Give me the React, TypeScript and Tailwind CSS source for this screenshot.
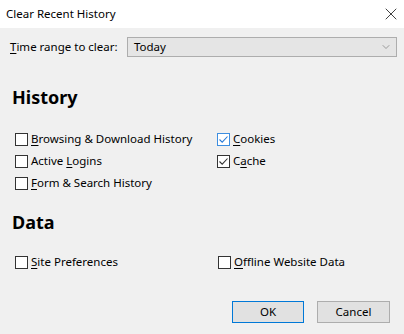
import { X, ChevronDown } from "lucide-react"

function Box({ checked, focus }: { checked?: boolean; focus?: boolean }) {
  return (
    <span
      className={`flex h-[13px] w-[13px] shrink-0 items-center justify-center border bg-white ${
        focus ? "border-[#3d8ee0]" : "border-[#333333]"
      }`}
    >
      {checked && (
        <svg width="11" height="11" viewBox="0 0 11 11">
          <path
            d="M1.5 5.5 L4.2 8.2 L9.5 2.5"
            fill="none"
            stroke={focus ? "#2a7bd6" : "#333333"}
            strokeWidth="1.1"
          />
        </svg>
      )}
    </span>
  )
}

function Check({
  pre,
  u,
  post,
  checked,
  focus,
  className,
}: {
  pre?: string
  u: string
  post: string
  checked?: boolean
  focus?: boolean
  className?: string
}) {
  return (
    <div className={`flex h-[22px] items-center gap-[3px] ${className ?? ""}`}>
      <Box checked={checked} focus={focus} />
      <span className="leading-none">
        {pre}
        <span className="underline underline-offset-2">{u}</span>
        {post}
      </span>
    </div>
  )
}

export default function App() {
  return (
    <div
      className="h-[334px] w-[404px] overflow-hidden bg-white text-[11.5px] text-black"
      style={{ fontFamily: '"Noto Sans", "Open Sans", sans-serif' }}
    >
      <div className="flex h-[28px] items-center justify-between pl-[6px] pr-[3px] bg-white">
        <span>Clear Recent History</span>
        <X className="h-[20px] w-[20px]" strokeWidth={0.9} />
      </div>
      <div className="flex h-[306px] flex-col bg-[#f0f0f0]">
        <div className="mt-[9px] flex h-[20px] items-center">
          <span className="ml-[10px] w-[117px]">
            <span className="underline underline-offset-2">T</span>ime range to clear:
          </span>
          <div className="flex h-[20px] w-[270px] items-center justify-between border border-[#adadad] bg-[#e5e5e5] pl-[6px] pr-[4px]">
            <span>Today</span>
            <ChevronDown className="h-[12px] w-[12px] text-[#666]" strokeWidth={1.2} />
          </div>
        </div>
        <div className="ml-[12px] mt-[29px] text-[18px] font-bold leading-[22px]">History</div>
        <div className="mt-[20px] flex">
          <div className="ml-[15px] flex w-[202px] flex-col">
            <Check u="B" post="rowsing & Download History" />
            <Check pre="Active " u="L" post="ogins" />
            <Check u="F" post="orm & Search History" />
          </div>
          <div className="flex flex-col">
            <Check u="C" post="ookies" checked focus />
            <Check pre="C" u="a" post="che" checked />
          </div>
        </div>
        <div className="ml-[12px] mt-[17px] text-[18px] font-bold leading-[22px]">Data</div>
        <div className="mt-[18px] flex">
          <Check className="ml-[15px] w-[203px]" u="S" post="ite Preferences" />
          <Check u="O" post="ffline Website Data" />
        </div>
        <div className="mt-[28px] flex justify-end gap-[13px] pr-[14px]">
          <button className="h-[22px] w-[72px] border border-[#0078d7] bg-[#e1e1e1]">OK</button>
          <button className="h-[22px] w-[73px] border border-[#adadad] bg-[#e1e1e1]">Cancel</button>
        </div>
      </div>
    </div>
  )
}
